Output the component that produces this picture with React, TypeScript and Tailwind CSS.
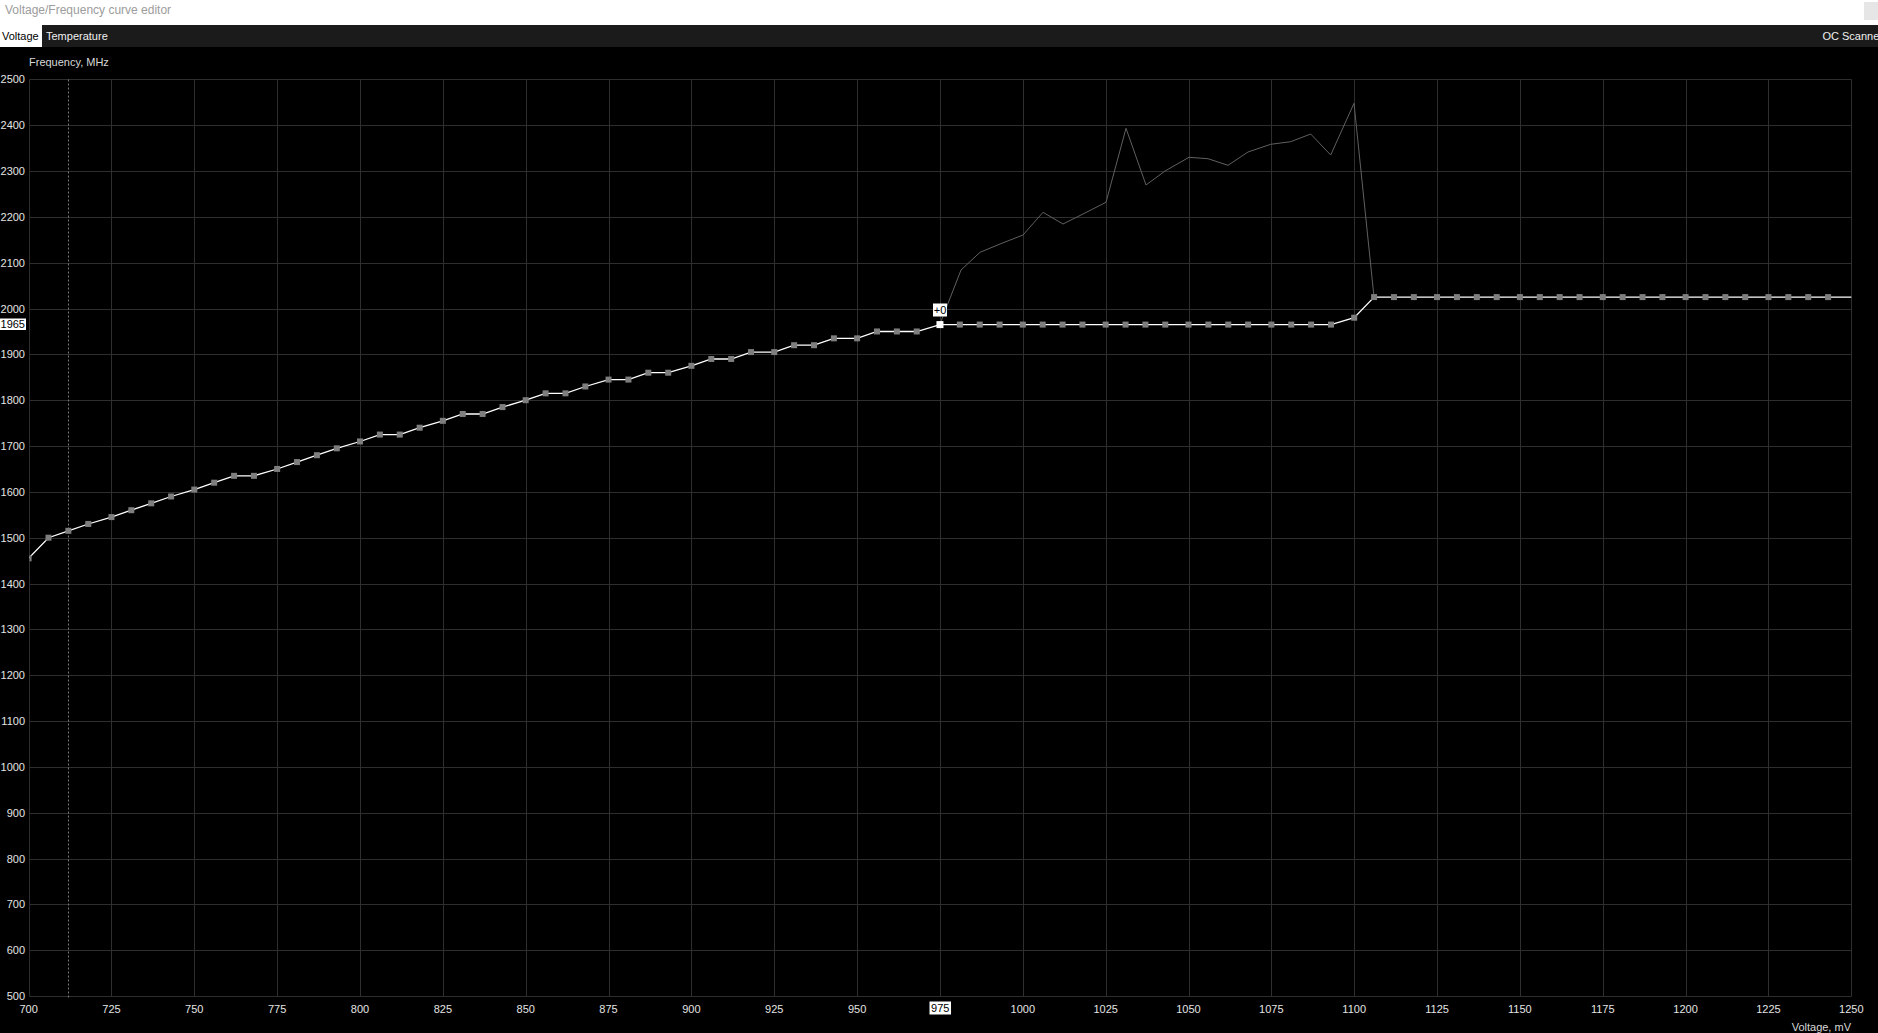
import React from "react";

const X = (v: number) => 28.6 + (v - 700) * 3.314;
const Y = (f: number) => 537.7 - (f - 1500) * 0.4583;
const crisp = (n: number) => Math.round(n) + 0.5;

const freqs: Record<number, number> = {
  700: 1455, 706: 1500, 712: 1515, 718: 1530, 725: 1545, 731: 1560, 737: 1575, 743: 1590,
  750: 1605, 756: 1620, 762: 1635, 768: 1635, 775: 1650, 781: 1665, 787: 1680, 793: 1695,
  800: 1710, 806: 1725, 812: 1725, 818: 1740, 825: 1755, 831: 1770, 837: 1770, 843: 1785,
  850: 1800, 856: 1815, 862: 1815, 868: 1830, 875: 1845, 881: 1845, 887: 1860, 893: 1860,
  900: 1875, 906: 1890, 912: 1890, 918: 1905, 925: 1905, 931: 1920, 937: 1920, 943: 1935,
  950: 1935, 956: 1950, 962: 1950, 968: 1950, 975: 1965,
};

const voltages: number[] = [];
for (let b = 700; b < 1250; b += 25) {
  voltages.push(b, b + 6, b + 12, b + 18);
}

const freqOf = (v: number) => {
  if (freqs[v] !== undefined) return freqs[v];
  if (v < 1100) return 1965;
  if (v === 1100) return 1980;
  return 2025;
};

const curve = voltages.map((v) => ({ v, f: freqOf(v) }));
const linePts = [...curve, { v: 1250, f: 2025 }]
  .map((p) => `${X(p.v).toFixed(1)},${Y(p.f).toFixed(1)}`)
  .join(" ");

const greyLine: [number, number][] = [
  [940, 324], [961, 270], [980, 252.3], [1000, 244], [1023, 235], [1043, 212.3],
  [1063, 224], [1083, 214], [1106, 202.3], [1126, 128.3], [1146, 185], [1165, 171],
  [1189, 157.3], [1208, 158.7], [1228, 165.3], [1248, 152], [1270.7, 144.3],
  [1290.7, 141.7], [1310.7, 134], [1330.7, 155], [1354, 103.3], [1374, 297],
];

const vTicks: number[] = [];
for (let v = 700; v <= 1250; v += 25) vTicks.push(v);
const fTicks: number[] = [];
for (let f = 500; f <= 2500; f += 100) fTicks.push(f);

const FONT = '"Liberation Sans", Arial, sans-serif';

function Chart() {
  const left = crisp(X(700));
  const right = crisp(X(1250));
  const top = crisp(Y(2500));
  const bottom = crisp(Y(500));
  return (
    <svg
      className="block"
      width={1878}
      height={986}
      viewBox="0 47 1878 986"
      style={{ fontFamily: FONT }}
    >
      <defs>
        <clipPath id="plot">
          <rect x={left} y={top - 10} width={right - left + 10} height={bottom - top + 10} />
        </clipPath>
      </defs>
      <rect x={0} y={47} width={1878} height={986} fill="#000" />
      {/* grid */}
      {fTicks.map((f) => (
        <line key={"h" + f} x1={left} x2={right} y1={crisp(Y(f))} y2={crisp(Y(f))} stroke="#2e2e2e" strokeWidth={1} />
      ))}
      {vTicks.map((v) => (
        <line key={"v" + v} x1={crisp(X(v))} x2={crisp(X(v))} y1={top} y2={bottom} stroke="#2e2e2e" strokeWidth={1} />
      ))}
      {/* current voltage dashed line */}
      <line x1={crisp(X(712))} x2={crisp(X(712))} y1={top} y2={bottom + 2} stroke="#7a7a7a" strokeWidth={1} strokeDasharray="2 2" />

      {/* axis titles */}
      <text x={29} y={62} fill="#d8d8d8" fontSize={11} dominantBaseline="central">Frequency, MHz</text>
      <text x={1851} y={1027} fill="#d8d8d8" fontSize={11} textAnchor="end" dominantBaseline="central">Voltage, mV</text>

      {/* y labels */}
      {fTicks.map((f) => (
        <text key={"yl" + f} x={25} y={Y(f)} fill="#e4e4e4" fontSize={11} textAnchor="end" dominantBaseline="central">
          {f}
        </text>
      ))}
      {/* x labels */}
      {vTicks.filter((v) => v !== 975).map((v) => (
        <text key={"xl" + v} x={X(v)} y={1008.5} fill="#e4e4e4" fontSize={11} textAnchor="middle" dominantBaseline="central">
          {v}
        </text>
      ))}

      {/* upper grey line */}
      <polyline
        points={greyLine.map(([x, y]) => `${x},${y}`).join(" ")}
        fill="none"
        stroke="#606060"
        strokeWidth={1}
      />

      <g clipPath="url(#plot)">
        <polyline points={linePts} fill="none" stroke="#ffffff" strokeWidth={1.3} />
        {curve.map((p) =>
          p.v === 975 ? null : (
            <rect key={"p" + p.v} x={X(p.v) - 3} y={Y(p.f) - 3} width={6} height={6} fill="#7e7e7e" />
          )
        )}
        <rect x={X(975) - 3.5} y={Y(1965) - 3.5} width={7} height={7} fill="#ffffff" />
      </g>

      {/* highlighted labels */}
      <rect x={933} y={303.5} width={14} height={13} fill="#ffffff" />
      <text x={940} y={310.2} fill="#000" fontSize={11} textAnchor="middle" dominantBaseline="central">+0</text>

      <rect x={0} y={318.5} width={26} height={11.5} fill="#ffffff" />
      <text x={25} y={324.3} fill="#000" fontSize={11} textAnchor="end" dominantBaseline="central">1965</text>

      <rect x={929.5} y={1001.5} width={21.5} height={13} fill="#ffffff" />
      <text x={940.2} y={1008.3} fill="#000" fontSize={11} textAnchor="middle" dominantBaseline="central">975</text>
    </svg>
  );
}

export default function App() {
  return (
    <div
      className="w-[1878px] h-[1033px] overflow-hidden bg-black flex flex-col"
      style={{ fontFamily: FONT }}
    >
      <div className="h-[25px] shrink-0 bg-white flex items-start justify-between">
        <span className="pl-[5px] pt-[3px] text-[12px] leading-[14px] text-[#9c9c9c]">
          Voltage/Frequency curve editor
        </span>
        <div className="w-[14px] h-[18px] mt-[2px] bg-[#e6e6e6]" />
      </div>
      <div className="h-[22px] shrink-0 bg-[#1b1b1b] flex items-stretch text-[11px] overflow-hidden">
        <div className="w-[42px] pl-[2px] bg-white text-black flex items-center">Voltage</div>
        <div className="ml-[4px] text-[#f0f0f0] flex items-center">Temperature</div>
        <div className="ml-auto mr-[-5px] text-[#f0f0f0] flex items-center whitespace-nowrap">OC Scanner</div>
      </div>
      <div className="flex-1 bg-black">
        <Chart />
      </div>
    </div>
  );
}
